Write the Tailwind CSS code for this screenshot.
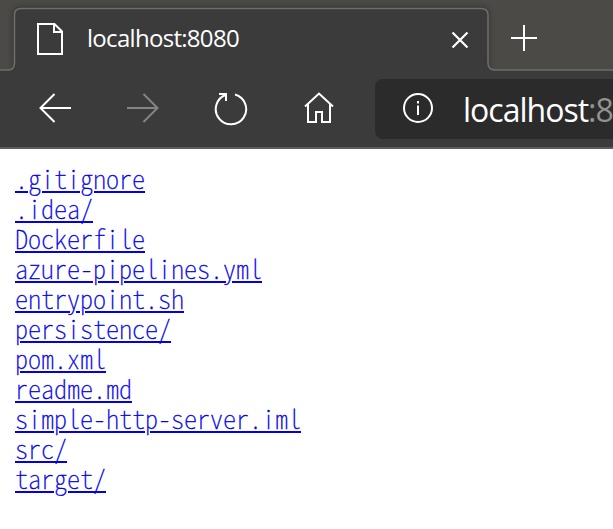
<!DOCTYPE html>
<html lang="en">
<head>
<meta charset="utf-8">
<title>localhost:8080</title>
<script src="https://cdn.jsdelivr.net/npm/@tailwindcss/browser@4"></script>
</head>
<body class="w-[613px] h-[529px] overflow-hidden bg-white font-['Open_Sans',sans-serif] text-white">
<header class="relative h-[149px] bg-[#3b3b3b] border-b-2 border-[#5d5d5d] overflow-hidden">
  <svg class="absolute inset-0" width="613" height="80" viewBox="0 0 613 80" fill="none">
    <defs>
      <filter id="shade" x="-5%" y="-20%" width="110%" height="140%"><feGaussianBlur stdDeviation="3"/></filter>
      <clipPath id="strip"><rect width="613" height="70"/></clipPath>
    </defs>
    <rect width="613" height="70" fill="#4c4a47"/>
    <path clip-path="url(#strip)" d="M14 76V14Q14 8 20 8H482Q488 8 488 14V76Z" fill="#000" opacity=".4" filter="url(#shade)"/>
    <path d="M0 70H8Q14.500 70 14.500 63V15Q14.500 8.500 21 8.500H481Q488 8.500 488 15V63Q488 70 495 70H613V80H0Z" fill="#3b3b3b"/>
    <path d="M-2 70H8Q14.500 70 14.500 63V15Q14.500 8.500 21 8.500H481Q488 8.500 488 15V63Q488 70 495 70H615" stroke="#6f6e6c" stroke-width="1.500"/>
  </svg>
  <div class="relative flex h-[70px] items-start">
    <svg class="ml-[36px] mt-[22px] shrink-0" width="28" height="34" viewBox="0 0 28 34" fill="none" stroke="#fff" stroke-width="2"><path d="M2 2H18.500L26 9.500V32H2ZM18 2V10H26"/></svg>
    <div class="ml-[23px] mt-[21px] w-[352px] text-[24px] leading-[34px] tracking-[-0.7px] whitespace-nowrap">localhost:8080</div>
    <svg class="ml-[11px] mt-[30px] shrink-0" width="20" height="20" viewBox="0 0 20 20" stroke="#fff" stroke-width="2.200"><path d="M2.500 2.500L17.500 17.500M17.500 2.500L2.500 17.500"/></svg>
    <svg class="ml-[41px] mt-[25px] shrink-0" width="26" height="26" viewBox="0 0 26 26" stroke="#fff" stroke-width="2"><path d="M0 13H26M13 0V26"/></svg>
  </div>
  <div class="relative flex h-[77px] items-start pl-[39px]">
    <svg class="mt-[22px] shrink-0" width="32" height="32" viewBox="0 0 32 32" fill="none" stroke="#fff" stroke-width="2"><path d="M32 16H1.500M15.500 2L1.500 16L15.500 30"/></svg>
    <svg class="ml-[56px] mt-[22px] shrink-0" width="32" height="32" viewBox="0 0 32 32" fill="none" stroke="#858585" stroke-width="2"><path d="M0 16H30.500M16.500 2L30.500 16L16.500 30"/></svg>
    <svg class="ml-[55px] mt-[21px] shrink-0" width="36" height="36" viewBox="0 0 36 36" fill="none" stroke="#fff" stroke-width="2"><path d="M21 3.500A15.200 15.200 0 1 1 12 3.800M5 3H12V10"/></svg>
    <svg class="ml-[53px] mt-[20px] shrink-0" width="32" height="34" viewBox="0 0 32 34" fill="none" stroke="#fff" stroke-width="2"><path d="M2 16.500L16 3.500L30 16.500M5 14V32H13V22H19V32H27V14"/></svg>
    <div class="ml-[40px] mt-[9px] flex h-[60px] w-[260px] shrink-0 items-start rounded-lg bg-[#2b2b2b]">
      <svg class="ml-[27px] mt-[13px] shrink-0" width="32" height="32" viewBox="0 0 32 32" fill="none" stroke="#fff" stroke-width="2"><circle cx="16" cy="16" r="14"/><path d="M16 13.500V23M16 9V11.500"/></svg>
      <div class="ml-[29px] mt-[9px] text-[32px] leading-[44px] tracking-[-1px] whitespace-nowrap"><span>localhost</span><span class="text-[#929292]">:8080</span></div>
    </div>
  </div>
</header>
<main class="pl-[15px] pt-[14px]">
  <ul class="font-['Noto_Sans_CJK_KR',monospace] font-thin text-[26px] leading-[30px] text-[#0000ee] [font-feature-settings:'hwid','liga'_0] [-webkit-text-stroke:0.35px_#0000ee]">
    <li class="h-[30px]"><a class="underline decoration-2 underline-offset-[2px]" href="#">.gitignore</a></li>
    <li class="h-[30px]"><a class="underline decoration-2 underline-offset-[2px]" href="#">.idea/</a></li>
    <li class="h-[30px]"><a class="underline decoration-2 underline-offset-[2px]" href="#">Dockerfile</a></li>
    <li class="h-[30px]"><a class="underline decoration-2 underline-offset-[2px]" href="#">azure-pipelines.yml</a></li>
    <li class="h-[30px]"><a class="underline decoration-2 underline-offset-[2px]" href="#">entrypoint.sh</a></li>
    <li class="h-[30px]"><a class="underline decoration-2 underline-offset-[2px]" href="#">persistence/</a></li>
    <li class="h-[30px]"><a class="underline decoration-2 underline-offset-[2px]" href="#">pom.xml</a></li>
    <li class="h-[30px]"><a class="underline decoration-2 underline-offset-[2px]" href="#">readme.md</a></li>
    <li class="h-[30px]"><a class="underline decoration-2 underline-offset-[2px]" href="#">simple-http-server.iml</a></li>
    <li class="h-[30px]"><a class="underline decoration-2 underline-offset-[2px]" href="#">src/</a></li>
    <li class="h-[30px]"><a class="underline decoration-2 underline-offset-[2px]" href="#">target/</a></li>
  </ul>
</main>
</body>
</html>
